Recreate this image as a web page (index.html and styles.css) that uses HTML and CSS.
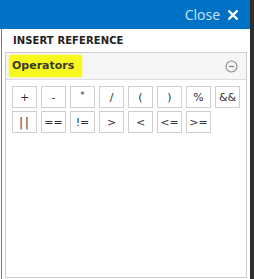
FILE: index.html
```html
<!DOCTYPE html>
<html>
<head>
<meta charset="utf-8">
<link rel="stylesheet" href="styles.css">
</head>
<body>
<div class="page">
  <div class="panel">
    <div class="topbar">
      <span class="close-text">Close</span>
      <svg class="close-x" width="10" height="10" viewBox="0 0 10 10"><path d="M1.2 1.2 L8.8 8.8 M8.8 1.2 L1.2 8.8" stroke="#ffffff" stroke-width="2.3" stroke-linecap="square"/></svg>
    </div>
    <div class="content">
      <div class="heading">INSERT REFERENCE</div>
      <div class="box">
        <div class="box-head">
          <span class="hl">Operators</span>
          <svg class="collapse" width="13" height="13" viewBox="0 0 13 13"><circle cx="6.5" cy="6.5" r="5.5" fill="none" stroke="#8a8a8a" stroke-width="1.1"/><path d="M3.8 6.5 H9.2" stroke="#8a8a8a" stroke-width="1.3"/></svg>
        </div>
        <div class="ops">
          <div class="op">+</div>
          <div class="op">-</div>
          <div class="op op-star">*</div>
          <div class="op">/</div>
          <div class="op">(</div>
          <div class="op">)</div>
          <div class="op">%</div>
          <div class="op">&amp;&amp;</div>
          <div class="op op-bars">||</div>
          <div class="op">==</div>
          <div class="op">!=</div>
          <div class="op">&gt;</div>
          <div class="op">&lt;</div>
          <div class="op">&lt;=</div>
          <div class="op">&gt;=</div>
        </div>
      </div>
    </div>
  </div>
  <div class="strip"></div>
</div>
</body>
</html>
```
FILE: styles.css
```css
html, body {
  margin: 0;
  padding: 0;
  background: #ffffff;
}
.page {
  display: flex;
  width: 254px;
  height: 279px;
  overflow: hidden;
}
.panel {
  width: 250px;
  height: 279px;
  display: flex;
  flex-direction: column;
}
.strip {
  width: 4px;
  height: 279px;
  background: #2e2e2e;
}
.topbar {
  height: 29px;
  background: #0072c6;
  display: flex;
  justify-content: flex-end;
  align-items: center;
  padding-right: 12px;
  box-sizing: border-box;
}
.close-text {
  font-family: "Open Sans", "Liberation Sans", sans-serif;
  font-size: 14px;
  color: #cfe2f5;
  line-height: 29px;
  margin-right: 8px;
  margin-top: -1px;
}
.close-x {
  display: block;
  margin-top: 1px;
}
.content {
  flex: 1;
  margin-left: 1px;
  border-left: 1px solid #7a7a7a;
  display: flex;
  flex-direction: column;
}
.heading {
  height: 23px;
  line-height: 23px;
  padding-left: 11px;
  font-family: "DejaVu Sans", Verdana, sans-serif;
  font-weight: bold;
  font-size: 10px;
  color: #222222;
  letter-spacing: 0.1px;
}
.box {
  margin: 0 3px 1px 3px;
  border: 1px solid #cccccc;
  flex: 1;
}
.box-head {
  height: 26px;
  background: #f6f6f6;
  border-bottom: 1px solid #dddddd;
  display: flex;
  align-items: center;
  justify-content: space-between;
  padding: 0 8px 0 3px;
}
.hl {
  background: #f8f820;
  height: 22px;
  line-height: 22px;
  padding: 0 8px 0 3px;
  font-family: "DejaVu Sans", Verdana, sans-serif;
  font-weight: bold;
  font-size: 11px;
  color: #3a3a22;
  border-radius: 2px;
  box-shadow: 0 0 2px #f8f820;
}
.collapse {
  display: block;
}
.ops {
  display: flex;
  flex-wrap: wrap;
  gap: 3px 4px;
  padding: 6px;
}
.op {
  width: 25px;
  height: 22px;
  box-sizing: border-box;
  border: 1px solid #cfcfcf;
  display: flex;
  align-items: center;
  justify-content: center;
  font-family: "DejaVu Sans", Verdana, sans-serif;
  font-size: 11px;
  color: #333333;
}
.op-star {
  font-size: 9px;
  align-items: flex-start;
  padding-top: 3px;
}
.op-bars {
  font-weight: bold;
  color: #777777;
  font-size: 13px;
  letter-spacing: 1px;
}
```
